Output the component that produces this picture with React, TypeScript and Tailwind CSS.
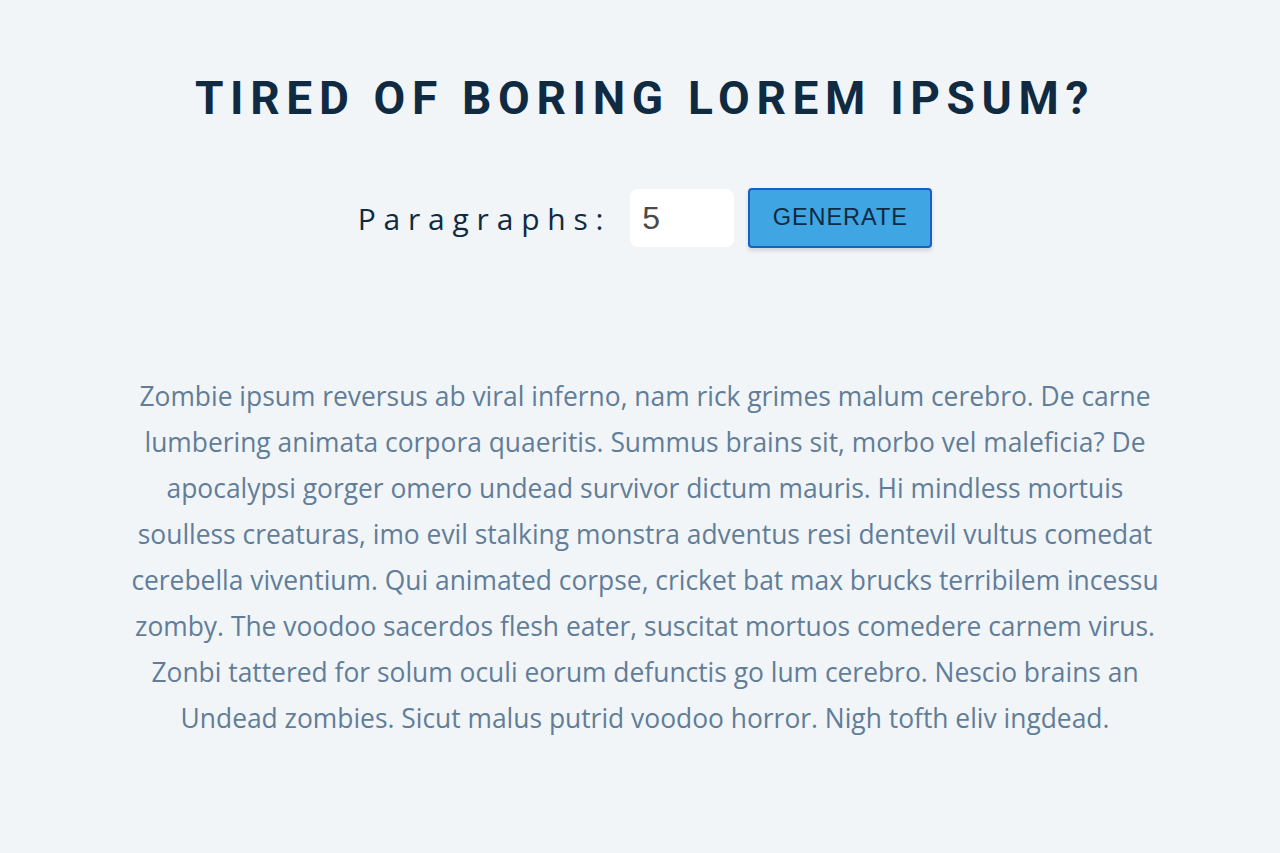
import { useState } from "react";

const text =
  "Zombie ipsum reversus ab viral inferno, nam rick grimes malum cerebro. De carne lumbering animata corpora quaeritis. Summus brains sit, morbo vel maleficia? De apocalypsi gorger omero undead survivor dictum mauris. Hi mindless mortuis soulless creaturas, imo evil stalking monstra adventus resi dentevil vultus comedat cerebella viventium. Qui animated corpse, cricket bat max brucks terribilem incessu zomby. The voodoo sacerdos flesh eater, suscitat mortuos comedere carnem virus. Zonbi tattered for solum oculi eorum defunctis go lum cerebro. Nescio brains an Undead zombies. Sicut malus putrid voodoo horror. Nigh tofth eliv ingdead.";

export default function App() {
  const [count, setCount] = useState("5");

  return (
    <main className="min-h-[853px] w-full bg-[#f1f5f8] pl-[10px] font-['Open_Sans',sans-serif]">
      <section className="mx-auto flex w-[1032px] flex-col items-center pt-[66px]">
        {/* Title */}
        <h1 className="font-['Roboto',sans-serif] text-[46px] font-bold uppercase leading-[64px] tracking-[0.145em] text-[#102a42]">
          Tired of boring lorem ipsum?
        </h1>

        {/* Form */}
        <form
          className="mt-[58px] flex items-center"
          onSubmit={(e) => e.preventDefault()}
        >
          <label
            htmlFor="amount"
            className="mr-[19px] text-[30px] tracking-[0.26em] text-[#102a42]"
          >
            Paragraphs:
          </label>
          <input
            id="amount"
            type="number"
            value={count}
            onChange={(e) => setCount(e.target.value)}
            className="h-[58px] w-[104px] rounded-[8px] bg-white px-3 font-['Liberation_Sans',sans-serif] text-[32px] text-[#4a4a4a] outline-none"
          />
          <button
            type="submit"
            className="ml-[14px] h-[60px] w-[184px] rounded-[4px] border-2 border-[#1c5fc4] bg-[#3fa6e3] font-['Liberation_Sans',sans-serif] text-[23.5px] uppercase tracking-[0.04em] text-[#102a42] shadow-[0_3px_4px_rgba(0,0,0,0.12)]"
          >
            Generate
          </button>
        </form>

        {/* Lorem text */}
        <article className="mt-[125px] text-center text-[26.4px] leading-[46px] text-[#617d98]">
          <p>{text}</p>
        </article>
      </section>
    </main>
  );
}
